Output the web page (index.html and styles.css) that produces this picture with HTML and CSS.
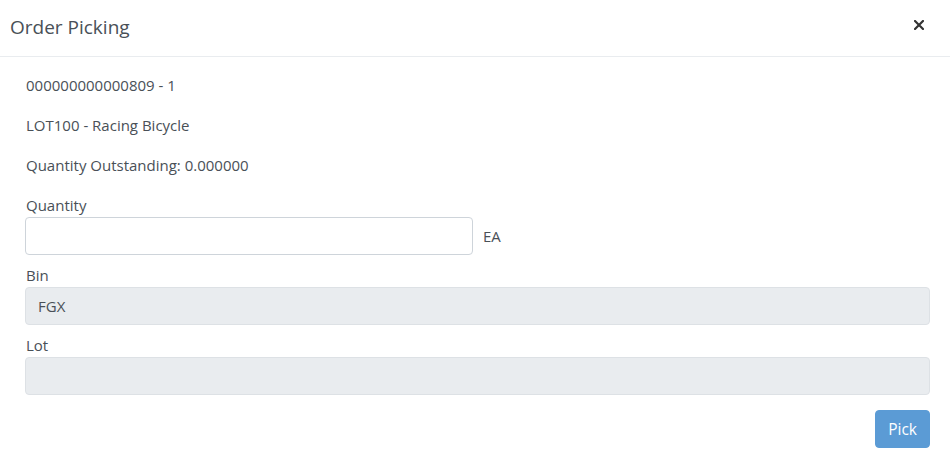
FILE: index.html
```html
<!DOCTYPE html>
<html lang="en">
<head>
<meta charset="utf-8">
<title>Order Picking</title>
<link rel="stylesheet" href="styles.css">
</head>
<body>
<div class="modal">
  <div class="modal-header">
    <h5 class="modal-title">Order Picking</h5>
    <button class="close" type="button" aria-label="Close">
      <svg width="10" height="10" viewBox="0 0 10 10"><path d="M1 1 L9 9 M9 1 L1 9" stroke="#333" stroke-width="2.2" stroke-linecap="square"/></svg>
    </button>
  </div>
  <div class="modal-body">
    <p class="line">000000000000809 - 1</p>
    <p class="line">LOT100 - Racing Bicycle</p>
    <p class="line">Quantity Outstanding: 0.000000</p>
    <div class="group">
      <label class="label">Quantity</label>
      <div class="qty-row">
        <input class="input qty" type="text">
        <span class="unit">EA</span>
      </div>
    </div>
    <div class="group">
      <label class="label">Bin</label>
      <input class="input" type="text" value="FGX" disabled>
    </div>
    <div class="group">
      <label class="label">Lot</label>
      <input class="input" type="text" value="" disabled>
    </div>
    <div class="actions">
      <button class="btn" type="button">Pick</button>
    </div>
  </div>
</div>
</body>
</html>
```
FILE: styles.css
```css
* { box-sizing: border-box; }
html, body { margin: 0; padding: 0; background: #fff; }
body {
  font-family: "Open Sans", "Noto Sans", sans-serif;
  font-size: 15px;
  color: #495057;
}
.modal { width: 950px; }
.modal-header {
  height: 57px;
  display: flex;
  align-items: center;
  justify-content: space-between;
  padding: 0 26px 2px 10px;
  border-bottom: 1px solid #e9ecef;
}
.modal-title {
  margin: 0;
  font-size: 19px;
  font-weight: 400;
  line-height: 24px;
  color: #495057;
}
.close {
  border: 0;
  background: transparent;
  padding: 0;
  display: flex;
  margin-top: -4px;
}
.modal-body { padding: 16px 20px 18px 25px; }
.line {
  margin: 0 0 16px;
  line-height: 24px;
  padding-left: 1px;
}
.group { margin-bottom: 8px; }
.label {
  display: block;
  line-height: 24px;
  padding-left: 1px;
}
.qty-row { display: flex; align-items: center; gap: 10px; }
.input {
  display: block;
  width: 100%;
  height: 38px;
  padding: 6px 12px;
  font: inherit;
  color: #495057;
  background: #fff;
  border: 1px solid #ced4da;
  border-radius: 4px;
}
.input:disabled { background: #e9ecef; border-color: #dde1e5; }
.qty { width: 448px; }
.actions { display: flex; justify-content: flex-end; margin-top: 15px; }
.btn {
  height: 38px;
  padding: 0 12px;
  font: inherit;
  font-size: 15.5px;
  color: #fff;
  background: #5b9bd5;
  border: 1px solid #5b9bd5;
  border-radius: 4px;
}
```
